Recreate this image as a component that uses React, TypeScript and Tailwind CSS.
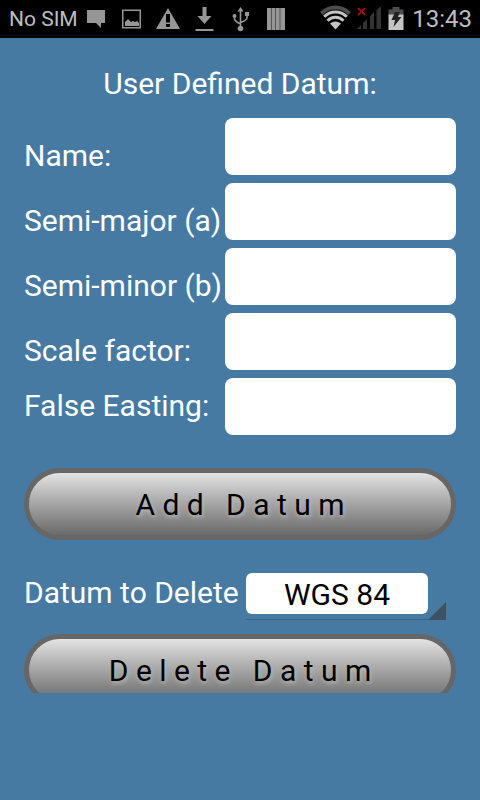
import { useState } from 'react';

type FieldProps = {
  id: string;
  label: string;
  centered?: boolean;
};

const FIELDS: FieldProps[] = [
  { id: 'name', label: 'Name:' },
  { id: 'semi-major', label: 'Semi-major (a)' },
  { id: 'semi-minor', label: 'Semi-minor (b)' },
  { id: 'scale-factor', label: 'Scale factor:' },
  { id: 'false-easting', label: 'False Easting:', centered: true },
];

const StatusBar = () => {
  return (
    <header className="flex h-[38px] shrink-0 items-center justify-between bg-black pr-2 pl-[9px] text-[#bebebe]">
      <div className="flex items-center">
        <span className="text-[21px] leading-7">No SIM</span>
        <svg
          className="ml-2 h-[38px] w-[210px] text-[#969696]"
          viewBox="86 0 210 38"
          fill="currentColor"
          aria-hidden="true"
        >
          {/* message */}
          <path d="M87 10h18v13h-4v5l-5-5h-9z" />
          {/* picture */}
          <path d="M122 9.500h19v19h-19zM123.500 11v16h16V11z" fillRule="evenodd" />
          <path d="M125 26v-4l3-3 3 3 2-1 2 1 2-1 2 2v3z" />
          {/* warning */}
          <path
            d="M168 8l12 21h-24zM166 14v8.500h4v-8.500zM166 24v3h4v-3z"
            fillRule="evenodd"
          />
          {/* download */}
          <path d="M202.500 7h4v9h5l-7 8-7-8h5zM195.500 29h18v2h-18z" />
          {/* usb */}
          <path d="M240.500 7l3 4.500h-6z" />
          <circle cx="240.500" cy="28.500" r="2.800" />
          <circle cx="234.500" cy="16" r="2" />
          <path d="M245 12h4v4h-4z" />
          <path
            d="M240.500 10v18M234.500 16v3q0 2 6 5M247 15v3q0 2-6.500 4.500"
            fill="none"
            stroke="currentColor"
            strokeWidth="1.600"
          />
          {/* barcode */}
          <path d="M267 8h18v22h-18z" />
          <path
            d="M271.500 8v22M275.500 8v22M280 8v22"
            stroke="#555"
            strokeWidth="1"
          />
        </svg>
      </div>
      <div className="flex items-center">
        <svg
          className="mr-1.5 h-[38px] w-[86px]"
          viewBox="320 0 86 38"
          fill="none"
          aria-hidden="true"
        >
          {/* wifi */}
          <path
            d="M321.500 13.500a19.500 19.500 0 0 1 28 0"
            stroke="#4d4d4d"
            strokeWidth="4"
          />
          <path
            d="M324.200 16.800a15.500 15.500 0 0 1 22.600 0M327.500 20.800a11 11 0 0 1 16 0"
            stroke="#c4c4c4"
            strokeWidth="3"
          />
          <path d="M330 23.500q5.500-4 11 0l-5.500 6z" fill="#c4c4c4" />
          {/* mobile signal */}
          <path
            d="M357 29l4-4v4zM363 23l4-4v10h-4zM370 16l4-4v17h-4zM376.500 10l4.500-4v23h-4.500z"
            fill="#333"
          />
          <path d="M358 8l7 7M365 8l-7 7" stroke="#a00d0d" strokeWidth="1.800" />
          {/* battery */}
          <path d="M388.500 9.500h4V7h7v2.500h4v6h-15z" fill="#4d4d4d" />
          <path d="M388.500 14.500h15V30h-15z" fill="#c4c4c4" />
          <path d="M395 12h5l-2 5h3.500l-8 10 1.500-7h-3.500z" fill="#222" />
        </svg>
        <time className="text-2xl leading-7">13:43</time>
      </div>
    </header>
  );
};

const Field = ({ id, label, centered }: FieldProps) => {
  return (
    <div className={centered ? 'flex items-center' : 'flex items-end'}>
      <label htmlFor={id} className="w-[201px] shrink-0 pb-px whitespace-nowrap">
        {label}
      </label>
      <input
        id={id}
        type="text"
        className="h-[57px] min-w-0 flex-1 rounded-lg bg-white px-3 text-black outline-none"
      />
    </div>
  );
};

const PillButton = ({ children }: { children: string }) => {
  return (
    <button
      type="button"
      className="h-[72px] w-full shrink-0 rounded-full border-[5px] border-[#666] bg-linear-to-b from-[#e4e4e4] to-[#6a6a6a] pt-0.5 whitespace-pre text-black text-shadow-[1px_2px_4px_#bbbbbb]"
    >
      {children}
    </button>
  );
};

export default function App() {
  const [datum, setDatum] = useState('WGS 84');

  return (
    <div className="flex h-screen flex-col bg-[#467aa3] font-[Roboto,sans-serif]">
      <StatusBar />
      <main className="flex min-h-0 flex-1 flex-col overflow-hidden px-6 pt-7 text-3xl leading-9 text-white">
        <h1 className="text-center">User Defined Datum:</h1>
        <form
          className="mt-4 flex flex-col"
          onSubmit={(e) => e.preventDefault()}
        >
          <div className="mb-[33px] flex flex-col gap-2">
            {FIELDS.map((field) => (
              <Field key={field.id} {...field} />
            ))}
          </div>
          <PillButton>A d d   D a t u m</PillButton>
          <div className="mt-[33px] mb-[14px] flex items-start">
            <label htmlFor="datum" className="w-[222px] pt-0.5 whitespace-nowrap">
              Datum to Delete
            </label>
            <div className="relative w-[200px] border-b border-[#3c6382] pr-[18px] pb-[5px]">
              <select
                id="datum"
                value={datum}
                onChange={(e) => setDatum(e.target.value)}
                className="block h-[41px] w-full appearance-none rounded-md bg-white pt-0.5 text-center text-black outline-none [text-align-last:center]"
              >
                <option>WGS 84</option>
              </select>
              <svg
                className="pointer-events-none absolute right-0 -bottom-px size-[18px]"
                viewBox="0 0 18 18"
                aria-hidden="true"
              >
                <path d="M18 0v18H0z" fill="#3f5263" />
              </svg>
            </div>
          </div>
          <PillButton>D e l e t e   D a t u m</PillButton>
        </form>
      </main>
      <footer className="h-[107px] shrink-0" />
    </div>
  );
}
